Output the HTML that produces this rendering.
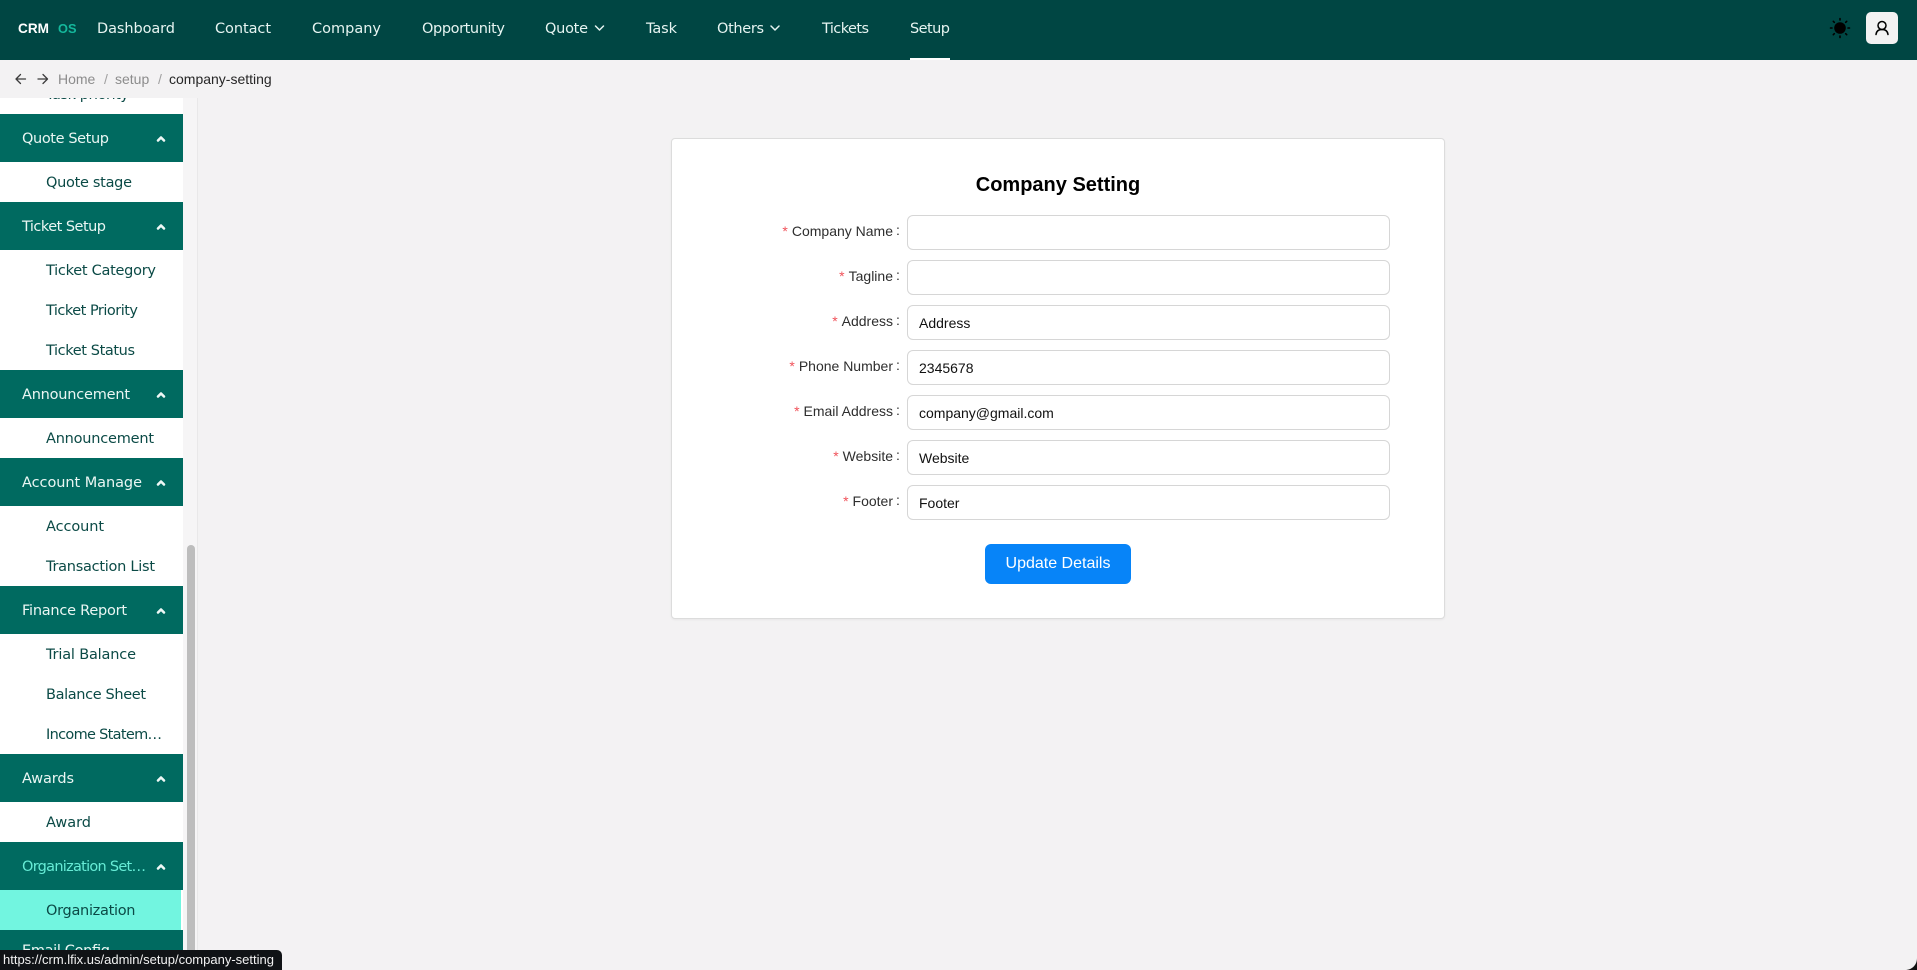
<!DOCTYPE html>
<html lang="en">
<head>
<meta charset="utf-8">
<title>Company Setting</title>
<style>
html,body{margin:0;padding:0;width:1917px;height:970px;overflow:hidden;background:#f3f2f3;font-family:"Liberation Sans",sans-serif}
.abs{position:absolute}
#nav{left:0;top:0;width:1917px;height:60px;background:#004643}
#crumb{left:0;top:60px;width:1917px;height:38px;background:#f3f2f3}
#side{left:0;top:98px;width:183px;height:872px;background:#fff;overflow:hidden}
#track{left:183px;top:98px;width:14px;height:872px;background:#f6f5f6;border-right:1px solid #e9e8e9}
#thumb{left:187px;top:545px;width:8px;height:425px;background:#bdbdbd;border-radius:4px}
svg{position:absolute;left:0;top:0;overflow:visible}
svg.f{width:1917px;height:970px}
.nt{font:14.5px "DejaVu Sans",sans-serif;fill:#e6f4f1}
.st{font:14.5px "DejaVu Sans",sans-serif;fill:#eaf6f3}
.it{font:14.5px "DejaVu Sans",sans-serif;fill:#0b4a46}
.hd{position:absolute;left:0;width:183px;height:48px;background:#006a60}
.hl{position:absolute;left:0;top:890px;width:181px;height:40px;background:#72f5e0}
#card{left:671px;top:138px;width:772px;height:479px;background:#fff;border:1px solid #dcdcdc;border-radius:4px;box-shadow:0 1px 2px rgba(0,0,0,.05)}
h1{position:absolute;left:671px;width:774px;top:174px;margin:0;text-align:center;font:bold 20px/23px "Liberation Sans",sans-serif;color:#000}
.lb{position:absolute;left:700px;width:193px;text-align:right;font:14px/16px "Liberation Sans",sans-serif;color:#2e2e2e;white-space:nowrap}
.lb i{font-style:normal;color:#f0525a;margin-right:4px}
.lb b{position:absolute;left:196px;top:-1px;font-weight:normal}
.in{position:absolute;left:907px;width:464px;height:33px;padding:0 6px 0 11px;border:1px solid #d6d6d6;border-radius:6px;background:#fff;font:14px/35px "Liberation Sans",sans-serif;color:#111}
#btn{left:985px;top:544px;width:146px;height:40px;background:#0784f8;border-radius:6px;color:#fff;text-align:center;font:16px/40px "Liberation Sans",sans-serif}
.bc{position:absolute;top:71px;font:14px/16px "Liberation Sans",sans-serif;color:#8c8c8c;white-space:nowrap}
#status{left:0;top:950px;width:282px;height:20px;background:#101316;border-radius:0 5px 0 0;color:#f2f2f2;font:13px/20px "Liberation Sans",sans-serif;white-space:nowrap}
#status span{position:absolute;left:3px;top:0}
</style>
</head>
<body>

<div class="abs" id="side"></div>
<div class="hd" style="top:114px"></div>
<div class="hd" style="top:202px"></div>
<div class="hd" style="top:370px"></div>
<div class="hd" style="top:458px"></div>
<div class="hd" style="top:586px"></div>
<div class="hd" style="top:754px"></div>
<div class="hd" style="top:842px"></div>
<div class="hl"></div>
<div class="hd" style="top:930px;height:40px"></div>
<div class="abs" id="track"></div>
<div class="abs" id="thumb"></div>

<svg class="f" viewBox="0 0 1917 970">
  <text class="it" x="46" y="99" textLength="83">Task priority</text>
  <text class="st" x="22" y="143" textLength="87">Quote Setup</text>
  <text class="it" x="46" y="187" textLength="86">Quote stage</text>
  <text class="st" x="22" y="231" textLength="84">Ticket Setup</text>
  <text class="it" x="46" y="275" textLength="110">Ticket Category</text>
  <text class="it" x="46" y="315" textLength="92">Ticket Priority</text>
  <text class="it" x="46" y="355" textLength="89">Ticket Status</text>
  <text class="st" x="22" y="399" textLength="108">Announcement</text>
  <text class="it" x="46" y="443" textLength="108">Announcement</text>
  <text class="st" x="22" y="487" textLength="120">Account Manage</text>
  <text class="it" x="46" y="531" textLength="58">Account</text>
  <text class="it" x="46" y="571" textLength="109">Transaction List</text>
  <text class="st" x="22" y="615" textLength="105">Finance Report</text>
  <text class="it" x="46" y="659" textLength="90">Trial Balance</text>
  <text class="it" x="46" y="699" textLength="100">Balance Sheet</text>
  <text class="it" x="46" y="739" textLength="116">Income Statem…</text>
  <text class="st" x="22" y="783" textLength="52">Awards</text>
  <text class="it" x="46" y="827" textLength="45">Award</text>
  <text class="st" x="22" y="871" textLength="124" style="fill:#66ecd6">Organization Set…</text>
  <text class="it" x="46" y="915" textLength="89.500">Organization</text>
  <text class="st" x="22" y="955" textLength="88">Email Config</text>
  <g fill="none" stroke="#eef8f6" stroke-width="2.600" stroke-linecap="round" stroke-linejoin="round">
    <path d="M158 140.500l3-3 3 3"/>
    <path d="M158 228.500l3-3 3 3"/>
    <path d="M158 396.500l3-3 3 3"/>
    <path d="M158 484.500l3-3 3 3"/>
    <path d="M158 612.500l3-3 3 3"/>
    <path d="M158 780.500l3-3 3 3"/>
    <path d="M158 868.500l3-3 3 3"/>
  </g>
</svg>

<div class="abs" id="crumb"></div>
<svg class="f" viewBox="0 0 1917 970">
  <g fill="none" stroke="#3c3c3c" stroke-width="1.300" stroke-linecap="round" stroke-linejoin="round">
    <path d="M25.500 79H16.500M20.500 74.500L16 79l4.500 4.500"/>
    <path d="M38 79H47M43 74.500L47.500 79 43 83.500"/>
  </g>
</svg>
<span class="bc" style="left:58px">Home</span>
<span class="bc" style="left:104px;color:#a0a0a0">/</span>
<span class="bc" style="left:115px">setup</span>
<span class="bc" style="left:158px;color:#a0a0a0">/</span>
<span class="bc" style="left:169px;color:#262626">company-setting</span>

<div class="abs" id="nav"></div>
<svg class="f" viewBox="0 0 1917 970">
  <text x="18" y="33" style="font:bold 13.600px 'Liberation Sans',sans-serif;fill:#fff">CRM</text>
  <text x="58" y="33" style="font:bold 12.800px 'Liberation Sans',sans-serif;fill:#14b89c">OS</text>
  <text class="nt" x="97" y="33" textLength="78">Dashboard</text>
  <text class="nt" x="215" y="33" textLength="56">Contact</text>
  <text class="nt" x="312" y="33" textLength="69">Company</text>
  <text class="nt" x="422" y="33" textLength="83">Opportunity</text>
  <text class="nt" x="545" y="33" textLength="43">Quote</text>
  <text class="nt" x="646" y="33" textLength="31">Task</text>
  <text class="nt" x="717" y="33" textLength="47">Others</text>
  <text class="nt" x="822" y="33" textLength="47">Tickets</text>
  <text class="nt" x="910" y="33" textLength="40">Setup</text>
  <g fill="none" stroke="#e6f4f1" stroke-width="1.500" stroke-linecap="round" stroke-linejoin="round">
    <path d="M595.500 26l4 4 4-4"/>
    <path d="M771 26l4 4 4-4"/>
  </g>
  <rect x="910" y="58" width="40" height="2" fill="#fff"/>
  <circle cx="1840" cy="28" r="5.800" fill="#000"/>
  <g stroke="#000" stroke-width="1.600" stroke-linecap="round">
    <path d="M1840 18.500v1.500M1840 36v1.500M1830.500 28h1.500M1848 28h1.500M1833.300 21.300l1 1M1845.700 33.700l1 1M1833.300 34.700l1-1M1845.700 22.300l1-1"/>
  </g>
  <rect x="1866" y="12" width="32" height="32" rx="5" fill="#f3f2f3"/>
  <circle cx="1882" cy="25.500" r="4" fill="none" stroke="#000" stroke-width="1.500"/>
  <path d="M1876 34.500c.4-3.400 2.800-5 6-5s5.600 1.600 6 5" fill="none" stroke="#000" stroke-width="1.500" stroke-linecap="round"/>
</svg>

<div class="abs" id="card"></div>
<h1>Company Setting</h1>

<div class="lb" style="top:223px"><i>*</i>Company Name<b>:</b></div>
<div class="lb" style="top:268px"><i>*</i>Tagline<b>:</b></div>
<div class="lb" style="top:313px"><i>*</i>Address<b>:</b></div>
<div class="lb" style="top:358px"><i>*</i>Phone Number<b>:</b></div>
<div class="lb" style="top:403px"><i>*</i>Email Address<b>:</b></div>
<div class="lb" style="top:448px"><i>*</i>Website<b>:</b></div>
<div class="lb" style="top:493px"><i>*</i>Footer<b>:</b></div>

<div class="in" style="top:215px"></div>
<div class="in" style="top:260px"></div>
<div class="in" style="top:305px">Address</div>
<div class="in" style="top:350px">2345678</div>
<div class="in" style="top:395px">company@gmail.com</div>
<div class="in" style="top:440px">Website</div>
<div class="in" style="top:485px">Footer</div>

<div class="abs" id="btn">Update Details</div>

<div class="abs" id="status"><span>https://crm.lfix.us/admin/setup/company-setting</span></div>

<svg class="f" viewBox="0 0 1917 970">
  <path d="M1917 958v12h-12c7 0 12-5 12-12z" fill="#111"/>
</svg>
</body>
</html>
